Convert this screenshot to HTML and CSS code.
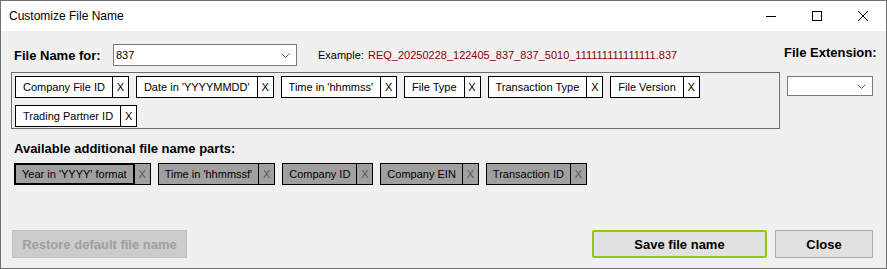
FILE: index.html
```html
<!DOCTYPE html>
<html lang="en">
<head>
    <meta charset="UTF-8">
    <title>Customize File Name</title>
    <link rel="stylesheet" href="styles.css">
</head>
<body>
    <div class="ventana">
        <div class="barra-titulo">
            <span class="titulo">Customize File Name</span>
            <div class="controles">
                <span class="control">
                    <svg width="10" height="10" viewBox="0 0 10 10"><line x1="0" y1="5.5" x2="10" y2="5.5" stroke="#000" stroke-width="1"/></svg>
                </span>
                <span class="control">
                    <svg width="10" height="10" viewBox="0 0 10 10"><rect x="0.5" y="0.5" width="9" height="9" fill="none" stroke="#000" stroke-width="1"/></svg>
                </span>
                <span class="control">
                    <svg width="10" height="10" viewBox="0 0 10 10"><path d="M0 0 L10 10 M10 0 L0 10" stroke="#000" stroke-width="1"/></svg>
                </span>
            </div>
        </div>

        <div class="contenido">
            <div class="columna-izq">
                <div class="fila-nombre">
                    <label class="etiqueta-nombre">File Name for:</label>
                    <div class="combo combo-nombre">
                        <span class="combo-valor">837</span>
                        <svg class="chevron" width="9" height="5" viewBox="0 0 9 5"><polyline points="0.5,0.5 4.5,4.5 8.5,0.5" fill="none" stroke="#606060" stroke-width="1"/></svg>
                    </div>
                    <span class="ejemplo">Example:</span>
                    <span class="ejemplo-valor">REQ_20250228_122405_837_837_5010_111111111111111.837</span>
                </div>

                <!-- partes seleccionadas -->
                <div class="panel-partes">
                    <div class="parte"><span class="parte-nombre">Company File ID</span><span class="parte-quitar">X</span></div>
                    <div class="parte"><span class="parte-nombre">Date in 'YYYYMMDD'</span><span class="parte-quitar">X</span></div>
                    <div class="parte"><span class="parte-nombre">Time in 'hhmmss'</span><span class="parte-quitar">X</span></div>
                    <div class="parte"><span class="parte-nombre">File Type</span><span class="parte-quitar">X</span></div>
                    <div class="parte"><span class="parte-nombre">Transaction Type</span><span class="parte-quitar">X</span></div>
                    <div class="parte"><span class="parte-nombre">File Version</span><span class="parte-quitar">X</span></div>
                    <div class="parte"><span class="parte-nombre">Trading Partner ID</span><span class="parte-quitar">X</span></div>
                </div>

                <div class="etiqueta-disponibles">Available additional file name parts:</div>

                <!-- partes disponibles -->
                <div class="panel-disponibles">
                    <div class="parte parte-disponible parte-foco"><span class="parte-nombre">Year in 'YYYY' format</span><span class="parte-quitar">X</span></div>
                    <div class="parte parte-disponible"><span class="parte-nombre">Time in 'hhmmssf'</span><span class="parte-quitar">X</span></div>
                    <div class="parte parte-disponible"><span class="parte-nombre">Company ID</span><span class="parte-quitar">X</span></div>
                    <div class="parte parte-disponible"><span class="parte-nombre">Company EIN</span><span class="parte-quitar">X</span></div>
                    <div class="parte parte-disponible"><span class="parte-nombre">Transaction ID</span><span class="parte-quitar">X</span></div>
                </div>
            </div>

            <div class="columna-der">
                <label class="etiqueta-extension">File Extension:</label>
                <div class="combo combo-extension">
                    <span class="combo-valor"></span>
                    <svg class="chevron" width="9" height="5" viewBox="0 0 9 5"><polyline points="0.5,0.5 4.5,4.5 8.5,0.5" fill="none" stroke="#606060" stroke-width="1"/></svg>
                </div>
            </div>
        </div>

        <div class="botonera">
            <button class="boton boton-deshabilitado" disabled>Restore default file name</button>
            <div class="botones-der">
                <button class="boton boton-guardar">Save file name</button>
                <button class="boton boton-cerrar">Close</button>
            </div>
        </div>
    </div>
</body>
</html>
```

FILE: styles.css
```css
/* Dialogo estilo Windows Forms */
body {
    margin: 0;
    background-color: #f0f0f0;
    font-family: 'Liberation Sans', Arial, sans-serif;
    color: #000000;
}

.ventana {
    width: 887px;
    height: 269px;
    box-sizing: border-box;
    border: 1px solid #707070;
    background-color: #f0f0f0;
    display: flex;
    flex-direction: column;
}

.barra-titulo {
    height: 30px;
    background-color: #ffffff;
    display: flex;
    align-items: center;
    justify-content: space-between;
}

.titulo {
    font-size: 12px;
    padding-left: 8px;
}

.controles {
    display: flex;
    height: 100%;
}

.control {
    width: 46px;
    display: flex;
    align-items: center;
    justify-content: center;
}

.contenido {
    display: grid;
    grid-template-columns: 769px 1fr;
    padding: 13px 0 0 10px;
}

.fila-nombre {
    display: flex;
    align-items: center;
    height: 22px;
}

.etiqueta-nombre,
.etiqueta-extension,
.etiqueta-disponibles {
    font-size: 13px;
    font-weight: bold;
    line-height: 16px;
}

.etiqueta-nombre {
    margin-left: 3px;
    width: 99px;
    padding-top: 1px;
}

.combo {
    box-sizing: border-box;
    background-color: #ffffff;
    border: 1px solid #7a7a7a;
    display: flex;
    align-items: center;
    justify-content: space-between;
    padding: 0 6px 0 2px;
}

.combo-nombre {
    width: 184px;
    height: 22px;
}

.combo-valor {
    font-size: 11px;
}

.ejemplo {
    font-size: 11px;
    margin-left: 21px;
    width: 50px;
}

.ejemplo-valor {
    font-size: 11px;
    color: #8b0000;
}

/* Contenedor de las partes elegidas */
.panel-partes {
    margin-top: 6px;
    height: 57px;
    box-sizing: border-box;
    border: 1px solid #6d6d6d;
    padding: 3px;
    display: flex;
    flex-wrap: wrap;
    gap: 7px;
    align-content: flex-start;
}

.parte {
    display: flex;
    height: 22px;
    box-sizing: border-box;
    border: 1px solid #000000;
    background-color: #ffffff;
    font-size: 11px;
    line-height: 20px;
}

.parte-nombre {
    padding: 0 7px;
}

.parte-quitar {
    width: 15px;
    border-left: 1px solid #000000;
    text-align: center;
}

.etiqueta-disponibles {
    margin: 12px 0 0 3px;
}

.panel-disponibles {
    margin-top: 6px;
    padding-left: 3px;
    display: flex;
    flex-wrap: wrap;
    gap: 7px;
}

.parte-disponible {
    background-color: #a0a0a0;
}

.parte-disponible .parte-nombre {
    padding: 0 6px;
}

.parte-disponible .parte-quitar {
    color: #555555;
}

.parte-foco .parte-nombre {
    padding: 0 7px;
    box-shadow: inset 0 0 0 1px #000000;
}

.columna-der {
    display: flex;
    flex-direction: column;
    padding-top: 1px;
}

.etiqueta-extension {
    margin-left: 4px;
}

.combo-extension {
    margin: 15px 0 0 7px;
    width: 86px;
    height: 20px;
}

/* Botones inferiores */
.botonera {
    margin-top: auto;
    display: flex;
    justify-content: space-between;
    padding: 0 13px 10px 11px;
}

.botones-der {
    display: flex;
    gap: 8px;
}

.boton {
    height: 28px;
    box-sizing: border-box;
    font-family: 'Liberation Sans', Arial, sans-serif;
    font-size: 13px;
    font-weight: bold;
    background-color: #e1e1e1;
    border: 1px solid #adadad;
    color: #000000;
    padding: 0;
}

.boton-deshabilitado {
    width: 175px;
    background-color: #cccccc;
    border-color: #bfbfbf;
    color: #a0a0a0;
}

.boton-guardar {
    width: 175px;
    border: 2px solid #92c514;
    border-radius: 2px;
}

.boton-cerrar {
    width: 98px;
}
```
